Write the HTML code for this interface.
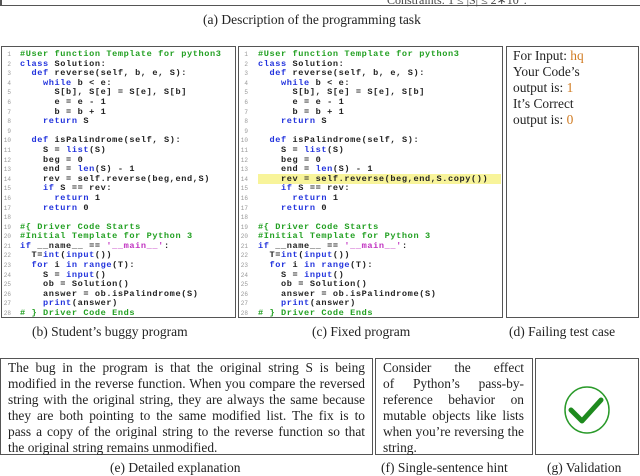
<!DOCTYPE html>
<html><head><meta charset="utf-8"><style>
body{margin:0;width:640px;height:476px;background:#fff;position:relative;overflow:hidden;font-family:"Liberation Serif",serif;color:#222}
.a{position:absolute}
.box{position:absolute;border:1.5px solid #555;box-sizing:border-box}
.cap{position:absolute;font-size:13.5px;white-space:nowrap}
pre{margin:0;font-family:"Liberation Mono",monospace;font-size:8.6px;line-height:9.6px;color:#222;letter-spacing:0.6px;font-weight:bold}
.ln{position:absolute;font-family:"Liberation Mono",monospace;font-size:6px;line-height:9.6px;color:#999;text-align:right;width:10px}
.c{color:#22a022}.k{color:#2233dd}.s{color:#c030c0}.o{color:#d07a20}
.t{font-size:13.4px;line-height:15.9px}
.t div{text-align:justify;text-align-last:justify;white-space:nowrap}
.t div.l{text-align-last:left}
</style></head><body>
<div class="a" style="left:0;top:5px;width:640px;border-top:1.5px solid #555"></div>
<div class="a" style="left:0;top:0;width:2px;height:6px;background:#555"></div>
<div class="a" style="left:387px;top:-9px;font-size:12px;color:#444">Constraints: 1 ≤ |S| ≤ 2∗10<sup>5</sup>.</div>
<div class="cap" style="left:203px;top:12px">(a) Description of the programming task</div>

<div class="box" style="left:1px;top:46px;width:235px;height:272px"></div>
<div class="ln" style="left:1px;top:50px">1<br>2<br>3<br>4<br>5<br>6<br>7<br>8<br>9<br>10<br>11<br>12<br>13<br>14<br>15<br>16<br>17<br>18<br>19<br>20<br>21<br>22<br>23<br>24<br>25<br>26<br>27<br>28</div>
<pre class="a" style="left:20px;top:50px"><span class="c">#User function Template for python3</span>
<span class="k">class</span> Solution:
  <span class="k">def</span> reverse(self, b, e, S):
    <span class="k">while</span> b &lt; e:
      S[b], S[e] = S[e], S[b]
      e = e - 1
      b = b + 1
    <span class="k">return</span> S

  <span class="k">def</span> isPalindrome(self, S):
    S = <span class="k">list</span>(S)
    beg = 0
    end = <span class="k">len</span>(S) - 1
    rev = self.reverse(beg,end,S)
    <span class="k">if</span> S == rev:
      <span class="k">return</span> 1
    <span class="k">return</span> 0

<span class="c">#{ Driver Code Starts</span>
<span class="c">#Initial Template for Python 3</span>
<span class="k">if</span> __name__ == <span class="s">'__main__'</span>:
  T=<span class="k">int</span>(<span class="k">input</span>())
  <span class="k">for</span> i <span class="k">in</span> <span class="k">range</span>(T):
    S = <span class="k">input</span>()
    ob = Solution()
    answer = ob.isPalindrome(S)
    <span class="k">print</span>(answer)
<span class="c"># } Driver Code Ends</span></pre>
<div class="cap" style="left:32px;top:324px">(b) Student’s buggy program</div>

<div class="box" style="left:238px;top:46px;width:265px;height:272px"></div>
<div class="a" style="left:258px;top:174px;width:243px;height:10px;background:#f8f49a"></div>
<div class="ln" style="left:238px;top:50px">1<br>2<br>3<br>4<br>5<br>6<br>7<br>8<br>9<br>10<br>11<br>12<br>13<br>14<br>15<br>16<br>17<br>18<br>19<br>20<br>21<br>22<br>23<br>24<br>25<br>26<br>27<br>28</div>
<pre class="a" style="left:258px;top:50px"><span class="c">#User function Template for python3</span>
<span class="k">class</span> Solution:
  <span class="k">def</span> reverse(self, b, e, S):
    <span class="k">while</span> b &lt; e:
      S[b], S[e] = S[e], S[b]
      e = e - 1
      b = b + 1
    <span class="k">return</span> S

  <span class="k">def</span> isPalindrome(self, S):
    S = <span class="k">list</span>(S)
    beg = 0
    end = <span class="k">len</span>(S) - 1
    rev = self.reverse(beg,end,S.copy())
    <span class="k">if</span> S == rev:
      <span class="k">return</span> 1
    <span class="k">return</span> 0

<span class="c">#{ Driver Code Starts</span>
<span class="c">#Initial Template for Python 3</span>
<span class="k">if</span> __name__ == <span class="s">'__main__'</span>:
  T=<span class="k">int</span>(<span class="k">input</span>())
  <span class="k">for</span> i <span class="k">in</span> <span class="k">range</span>(T):
    S = <span class="k">input</span>()
    ob = Solution()
    answer = ob.isPalindrome(S)
    <span class="k">print</span>(answer)
<span class="c"># } Driver Code Ends</span></pre>
<div class="cap" style="left:312px;top:324px">(c) Fixed program</div>

<div class="box" style="left:506px;top:46px;width:133px;height:272px"></div>
<div class="a t" style="left:513px;top:48px">For Input: <span class="o">hq</span><br>Your Code’s<br>output is: <span class="o">1</span><br>It’s Correct<br>output is: <span class="o">0</span></div>
<div class="cap" style="left:509px;top:324px">(d) Failing test case</div>

<div class="box" style="left:0;top:358px;width:373px;height:97px"></div>
<div class="a t" style="left:8px;top:360px;width:357px">
<div>The bug in the program is that the original string S is being</div>
<div>modified in the reverse function. When you compare the reversed</div>
<div>string with the original string, they are always the same because</div>
<div>they are both pointing to the same modified list. The fix is to</div>
<div>pass a copy of the original string to the reverse function so that</div>
<div class="l">the original string remains unmodified.</div>
</div>
<div class="cap" style="left:110px;top:460px">(e) Detailed explanation</div>

<div class="box" style="left:375px;top:358px;width:158px;height:97px"></div>
<div class="a t" style="left:383px;top:360px;width:141px">
<div>Consider the effect</div>
<div>of Python’s pass-by-</div>
<div>reference behavior on</div>
<div>mutable objects like lists</div>
<div>when you’re reversing the</div>
<div class="l">string.</div>
</div>
<div class="cap" style="left:381px;top:460px">(f) Single-sentence hint</div>

<div class="box" style="left:535px;top:358px;width:104px;height:97px"></div>
<svg class="a" style="left:560px;top:385px" width="54" height="50"><ellipse cx="27" cy="25" rx="22" ry="23" fill="none" stroke="#2a9a2a" stroke-width="1.5"/><path d="M11 25 L22 36 L41 15" fill="none" stroke="#1e8a1e" stroke-width="5" stroke-linecap="round" stroke-linejoin="round"/></svg>
<div class="cap" style="left:547px;top:460px">(g) Validation</div>
</body></html>
